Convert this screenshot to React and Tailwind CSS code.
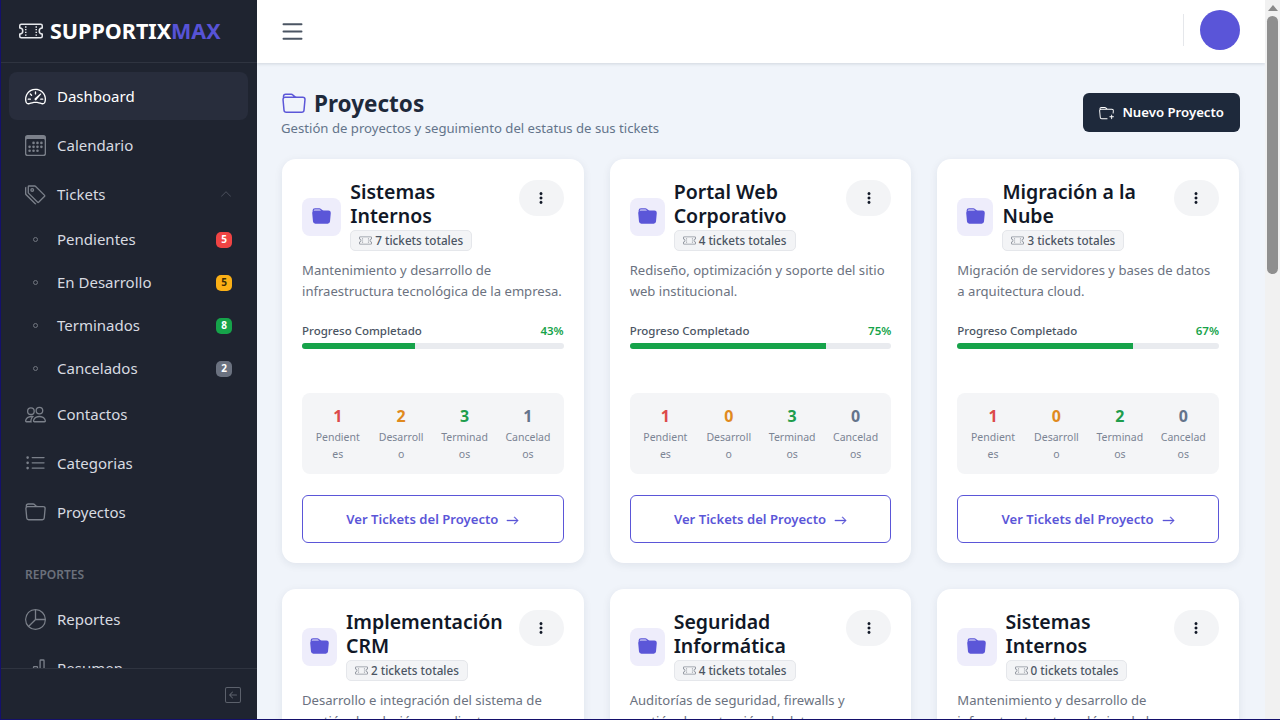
import {
  BsTicketPerforated,
  BsSpeedometer2,
  BsCalendar3,
  BsTags,
  BsChevronUp,
  BsPeople,
  BsListUl,
  BsFolder,
  BsFolderFill,
  BsFolderPlus,
  BsPieChart,
  BsBarChart,
  BsArrowLeftSquare,
  BsThreeDotsVertical,
  BsArrowRight,
  BsList,
} from "react-icons/bs";

const subItems = [
  { label: "Pendientes", count: 5, badge: "bg-[#ef4444] text-white" },
  { label: "En Desarrollo", count: 5, badge: "bg-[#fbb016] text-[#3a2c05]" },
  { label: "Terminados", count: 8, badge: "bg-[#16a34a] text-white" },
  { label: "Cancelados", count: 2, badge: "bg-[#6b7280] text-white" },
];

const projects = [
  {
    name: "Sistemas Internos",
    total: 7,
    desc: "Mantenimiento y desarrollo de infraestructura tecnológica de la empresa.",
    pct: 43,
    stats: [1, 2, 3, 1],
  },
  {
    name: "Portal Web Corporativo",
    total: 4,
    desc: "Rediseño, optimización y soporte del sitio web institucional.",
    pct: 75,
    stats: [1, 0, 3, 0],
  },
  {
    name: "Migración a la Nube",
    total: 3,
    desc: "Migración de servidores y bases de datos a arquitectura cloud.",
    pct: 67,
    stats: [1, 0, 2, 0],
  },
  {
    name: "Implementación CRM",
    total: 2,
    desc: "Desarrollo e integración del sistema de gestión de relación con clientes.",
    pct: 50,
    stats: [1, 0, 1, 0],
  },
  {
    name: "Seguridad Informática",
    total: 4,
    desc: "Auditorías de seguridad, firewalls y gestión de protección de datos.",
    pct: 50,
    stats: [1, 1, 2, 0],
  },
  {
    name: "Sistemas Internos",
    total: 0,
    desc: "Mantenimiento y desarrollo de infraestructura tecnológica de la empresa.",
    pct: 0,
    stats: [0, 0, 0, 0],
  },
];

const statCols = [
  { label: "Pendientes", color: "text-[#dc4a4a]" },
  { label: "Desarrollo", color: "text-[#e08a1e]" },
  { label: "Terminados", color: "text-[#1f9d4d]" },
  { label: "Cancelados", color: "text-[#64748b]" },
];

function NavItem({ icon: Icon, label, active, children }) {
  return (
    <div
      className={`ml-[8px] mr-[9px] flex h-[48px] items-center rounded-lg pl-4 pr-4 mb-px text-[15px] ${
        active ? "bg-[#282d3c] text-white" : "text-[#d8dbe1]"
      }`}
    >
      <Icon className={`mr-[11px] h-[21px] w-[21px] shrink-0 ${active ? "text-white" : "text-[#7b808a]"}`} />
      <span className="flex-1">{label}</span>
      {children}
    </div>
  );
}

function Sidebar() {
  return (
    <aside className="flex h-full w-[257px] shrink-0 flex-col border-l border-[#14106b] bg-[#1f2430]">
      <div className="flex h-[63px] shrink-0 items-center border-b border-[#2f3440] pl-[18px]">
        <BsTicketPerforated className="mr-[7px] h-[24px] w-[24px] text-[#e5e7eb]" />
        <span className="text-[21.5px] font-bold text-white">
          SUPPORTIX<span className="text-[#5753d6]">MAX</span>
        </span>
      </div>
      <nav className="min-h-0 flex-1 overflow-hidden pt-[9px]">
        <NavItem icon={BsSpeedometer2} label="Dashboard" active />
        <NavItem icon={BsCalendar3} label="Calendario" />
        <NavItem icon={BsTags} label="Tickets">
          <BsChevronUp className="h-[12px] w-[12px] text-[#4b505c]" />
        </NavItem>
        <div className="-mt-[1px]">
          {subItems.map((item) => (
            <div key={item.label} className="flex h-[43px] items-center pl-[32px] pr-[25px] text-[15px] text-[#d8dbe1]">
              <span className="mr-[19px] h-[5px] w-[5px] rounded-full border border-[#70757f]" />
              <span className="flex-1">{item.label}</span>
              <span className={`flex h-[16px] w-[16px] items-center justify-center rounded-[5px] text-[10px] font-bold ${item.badge}`}>
                {item.count}
              </span>
            </div>
          ))}
        </div>
        <NavItem icon={BsPeople} label="Contactos" />
        <NavItem icon={BsListUl} label="Categorias" />
        <NavItem icon={BsFolder} label="Proyectos" />
        <div className="mt-[31px] mb-[12px] pl-[24px] text-[12px] font-semibold leading-[16px] text-[#6b707b]">REPORTES</div>
        <NavItem icon={BsPieChart} label="Reportes" />
        <NavItem icon={BsBarChart} label="Resumen" />
      </nav>
      <div className="flex h-[51px] shrink-0 items-center justify-end border-t border-[#2f3440] pt-px pr-[16px]">
        <BsArrowLeftSquare className="h-[16px] w-[16px] text-[#5c616c]" />
      </div>
    </aside>
  );
}

function ProjectCard({ project }) {
  return (
    <div className="flex flex-col rounded-[14px] bg-white px-[20px] pt-[21px] pb-[20px] shadow-[0_2px_8px_rgba(30,41,59,0.08)]">
      <div className="mb-[7px] flex items-start justify-between">
        <div className="flex items-center gap-[9px]">
          <div className="flex h-[38px] w-[40px] min-w-[35px] items-center justify-center rounded-[8px] bg-[#eeedfb]">
            <BsFolderFill className="h-[19px] w-[19px] text-[#5b56d8]" />
          </div>
          <div>
            <h3 className="text-[19.5px] font-semibold leading-[24px] text-[#111827]">{project.name}</h3>
            <span className="mt-[2px] inline-flex h-[21px] items-center gap-[3px] rounded-[5px] border border-[#e5e7eb] bg-[#f3f4f6] px-[8px] text-[11.7px] font-medium text-[#4b5563]">
              <BsTicketPerforated className="h-[13px] w-[13px] text-[#8a8f99]" />
              {project.total} tickets totales
            </span>
          </div>
        </div>
        <button className="flex h-[36px] w-[45px] shrink-0 items-center justify-center rounded-full bg-[#f3f4f6] text-[#111827]">
          <BsThreeDotsVertical className="h-[14px] w-[14px]" stroke="currentColor" strokeWidth={0.4} />
        </button>
      </div>
      <p className="mb-[21px] text-[13.1px] leading-[21px] text-[#6b7280]">{project.desc}</p>
      <div className="mb-[4px] flex justify-between text-[11.5px] font-medium leading-[16px]">
        <span className="text-[#4b5563]">Progreso Completado</span>
        <span className="font-semibold text-[#16a34a]">{project.pct}%</span>
      </div>
      <div className="mb-[44px] h-[6px] rounded-full bg-[#e9ebef]">
        <div className="h-full rounded-l-full bg-[#16a34a]" style={{ width: `${project.pct}%` }} />
      </div>
      <div className="mb-[21px] grid h-[81px] grid-cols-4 rounded-[8px] bg-[#f4f5f7] px-[4px] pt-[13px]">
        {statCols.map((col, i) => (
          <div key={col.label} className="px-[8px] text-center">
            <div className={`text-[16px] leading-[20px] font-bold ${col.color}`}>{project.stats[i]}</div>
            <div className="mt-[3px] text-[10.5px] leading-[17px] [overflow-wrap:anywhere] text-[#7b8494]">{col.label}</div>
          </div>
        ))}
      </div>
      <button className="flex h-[48px] items-center justify-center gap-[8px] rounded-[6px] border border-[#5b56d8] bg-white pt-[2px] text-[13.1px] font-semibold text-[#5b56d8]">
        Ver Tickets del Proyecto
        <BsArrowRight className="h-[13px] w-[13px]" stroke="currentColor" strokeWidth={0.5} />
      </button>
    </div>
  );
}

export default function App() {
  return (
    <div className="flex h-screen w-full overflow-hidden border-b border-[#14106b] bg-[#f0f4fa] font-['Noto_Sans',sans-serif]">
      <Sidebar />
      <div className="flex min-w-0 flex-1 flex-col">
        <header className="flex h-[63px] shrink-0 items-center justify-between bg-white pb-[3px] pl-[21px] pr-[25px] shadow-[0_1px_3px_rgba(30,41,59,0.15)]">
          <BsList className="mt-[2px] h-[29px] w-[29px] text-[#4b5563]" />
          <div className="flex items-center">
            <div className="mr-[16px] h-[32px] w-px bg-[#e5e7eb]" />
            <div className="h-[40px] w-[40px] rounded-full bg-[#5a55d8]" />
          </div>
        </header>
        <main className="min-h-0 flex-1 overflow-hidden pl-[25px] pr-[25px] pt-[28px]">
          <div className="mb-[21px] flex items-start justify-between">
            <div>
              <h1 className="mt-px flex items-center gap-[8px] text-[22.5px] font-bold leading-[24px] text-[#1e293b]">
                <BsFolder className="h-[24px] w-[24px] text-[#5b56d8]" />
                Proyectos
              </h1>
              <p className="mt-[2px] -ml-px text-[13.15px] leading-[20px] text-[#64748b]">
                Gestión de proyectos y seguimiento del estatus de sus tickets
              </p>
            </div>
            <button className="mt-[2px] flex h-[39px] items-center gap-[8px] rounded-[6px] bg-[#1e293b] px-[16px] pt-[1px] text-[13.2px] font-semibold text-white">
              <BsFolderPlus className="h-[15px] w-[15px]" />
              Nuevo Proyecto
            </button>
          </div>
          <div className="mr-px grid grid-cols-3 gap-[26px]">
            {projects.map((project, i) => (
              <ProjectCard key={i} project={project} />
            ))}
          </div>
        </main>
      </div>
      <div className="flex h-full w-[15px] shrink-0 flex-col items-center bg-[#f1f1f1]">
        <div className="mt-[5px] h-0 w-0 border-x-[5px] border-b-[6px] border-x-transparent border-b-[#8a8a8a]" />
        <div className="mt-[5px] h-[258px] w-[11px] rounded-full bg-[#8f8f8f]" />
      </div>
    </div>
  );
}
